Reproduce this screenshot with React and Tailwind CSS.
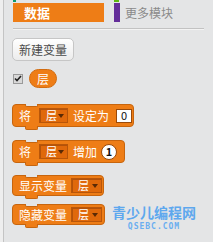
import React from "react";

const FONT = { fontFamily: '"Noto Sans CJK SC", "Noto Sans", sans-serif' };

// dropdown slot inside a block
const Drop = ({ w = "w-[29px]" }) => (
  <div className={`${w} shrink-0 h-[15px] bg-[#e0690b] border border-[#b8560a] shadow-[inset_1px_1px_0_#b45209] flex items-center justify-between pl-[6px] pr-[3px]`}>
    <span className="text-[11px] leading-none text-white">层</span>
    <svg width="6" height="4" viewBox="0 0 6 4"><path d="M0 0h6L3 4z" fill="#5a2a05" /></svg>
  </div>
);

const Block = ({ w, h = "h-[23px]", mt, children }) => (
  <div className={`relative ${w} ${h} ${mt} bg-[#ee7d16] border border-[#c7650e] rounded-[4px] flex items-center gap-[4px] pl-[6px] text-white text-[12px] whitespace-nowrap`}>
    {/* top notch */}
    <div className="absolute -top-px left-[12px] w-[13px] h-[3px] bg-[#e4e5e6] border-b border-x border-[#c7650e] rounded-b-[2px]" />
    {/* bottom bump */}
    <div className="absolute -bottom-[4px] left-[12px] w-[13px] h-[4px] bg-[#ee7d16] border-b border-x border-[#c7650e] rounded-b-[2px]" />
    {children}
  </div>
);

export default function App() {
  return (
    <div className="w-[213px] h-[242px] bg-[#eeeeee] pl-[3px] overflow-hidden" style={FONT}>
      <div className="relative h-full bg-[#e4e5e6] border-l border-[#c4c4c4] pl-[9px] pr-[9px]">
        {/* category tabs */}
        <div className="relative flex gap-[10px] pt-[3px]">
          <div className="absolute top-0 left-0 w-[3px] h-[2px] bg-[#0e9a6c]" />
          <div className="absolute top-0 left-[101px] w-[5px] h-[2px] bg-[#5cb712]" />
          <div className="w-[91px] h-[19px] bg-[#ee7d16] flex items-center pl-[11px]">
            <span className="text-white text-[13px] font-bold leading-none">数据</span>
          </div>
          <div className="flex items-center gap-[5px]">
            <div className="w-[6px] h-[19px] bg-[#632d99]" />
            <span className="text-[#8a8a8a] text-[12px] leading-none">更多模块</span>
          </div>
        </div>
        <div className="mt-[6px] h-px bg-[#c2c2c2] border-b border-[#f3f3f3] box-content" />

        {/* new variable button */}
        <button className="mt-[8px] ml-[-1px] w-[62px] h-[23px] rounded-[5px] border border-[#c6c6c6] bg-gradient-to-b from-[#ffffff] to-[#ececec] text-[#4a4a4a] text-[12px] leading-none">
          新建变量
        </button>

        {/* variable reporter */}
        <div className="mt-[8px] flex items-center gap-[6px]">
          <div className="w-[10px] h-[10px] bg-[#d8d8d8] border border-[#9a9a9a] flex items-center justify-center">
            <svg width="8" height="7" viewBox="0 0 8 7"><path d="M1 3.5l2 2L7 1" stroke="#222" strokeWidth="1.6" fill="none" /></svg>
          </div>
          <div className="w-[28px] h-[19px] rounded-full bg-[#ee7d16] border border-[#d26c10] flex items-center justify-center text-white text-[12px] leading-none">
            层
          </div>
        </div>

        {/* blocks */}
        <div className="mt-[16px] flex flex-col ml-[-1px]">
          <Block w="w-[122px]">
            <span className="mr-[4px]">将</span>
            <Drop />
            <span className="ml-[1px]">设定为</span>
            <div className="ml-[3px] w-[16px] h-[14px] bg-white border border-[#9a4a0a] text-[#111] text-[11px] leading-none flex items-center justify-center">0</div>
          </Block>
          <Block w="w-[113px]" mt="mt-[13px]">
            <span className="mr-[4px]">将</span>
            <Drop />
            <span className="ml-[1px]">增加</span>
            <div className="w-[16px] h-[16px] rounded-full bg-white border border-[#9a4a0a] text-[#111] text-[11px] font-bold leading-none flex items-center justify-center">1</div>
          </Block>
          <Block w="w-[92px]" h="h-[21px]" mt="mt-[12px]">
            <span>显示变量</span>
            <Drop w="w-[31px]" />
          </Block>
          <Block w="w-[93px]" h="h-[21px]" mt="mt-[8px]">
            <span>隐藏变量</span>
            <Drop w="w-[31px]" />
          </Block>
        </div>

        {/* watermark */}
        <div className="absolute left-[108px] top-[205px] flex flex-col items-center">
          <span className="text-[#5ea8ee] text-[14px] font-bold leading-none">青少儿编程网</span>
          <span className="mt-[4px] text-[#6aaef0] text-[8px] font-bold leading-none tracking-[1px]" style={{ fontFamily: '"DejaVu Sans Mono", monospace' }}>QSEBC.COM</span>
        </div>
      </div>
    </div>
  );
}
